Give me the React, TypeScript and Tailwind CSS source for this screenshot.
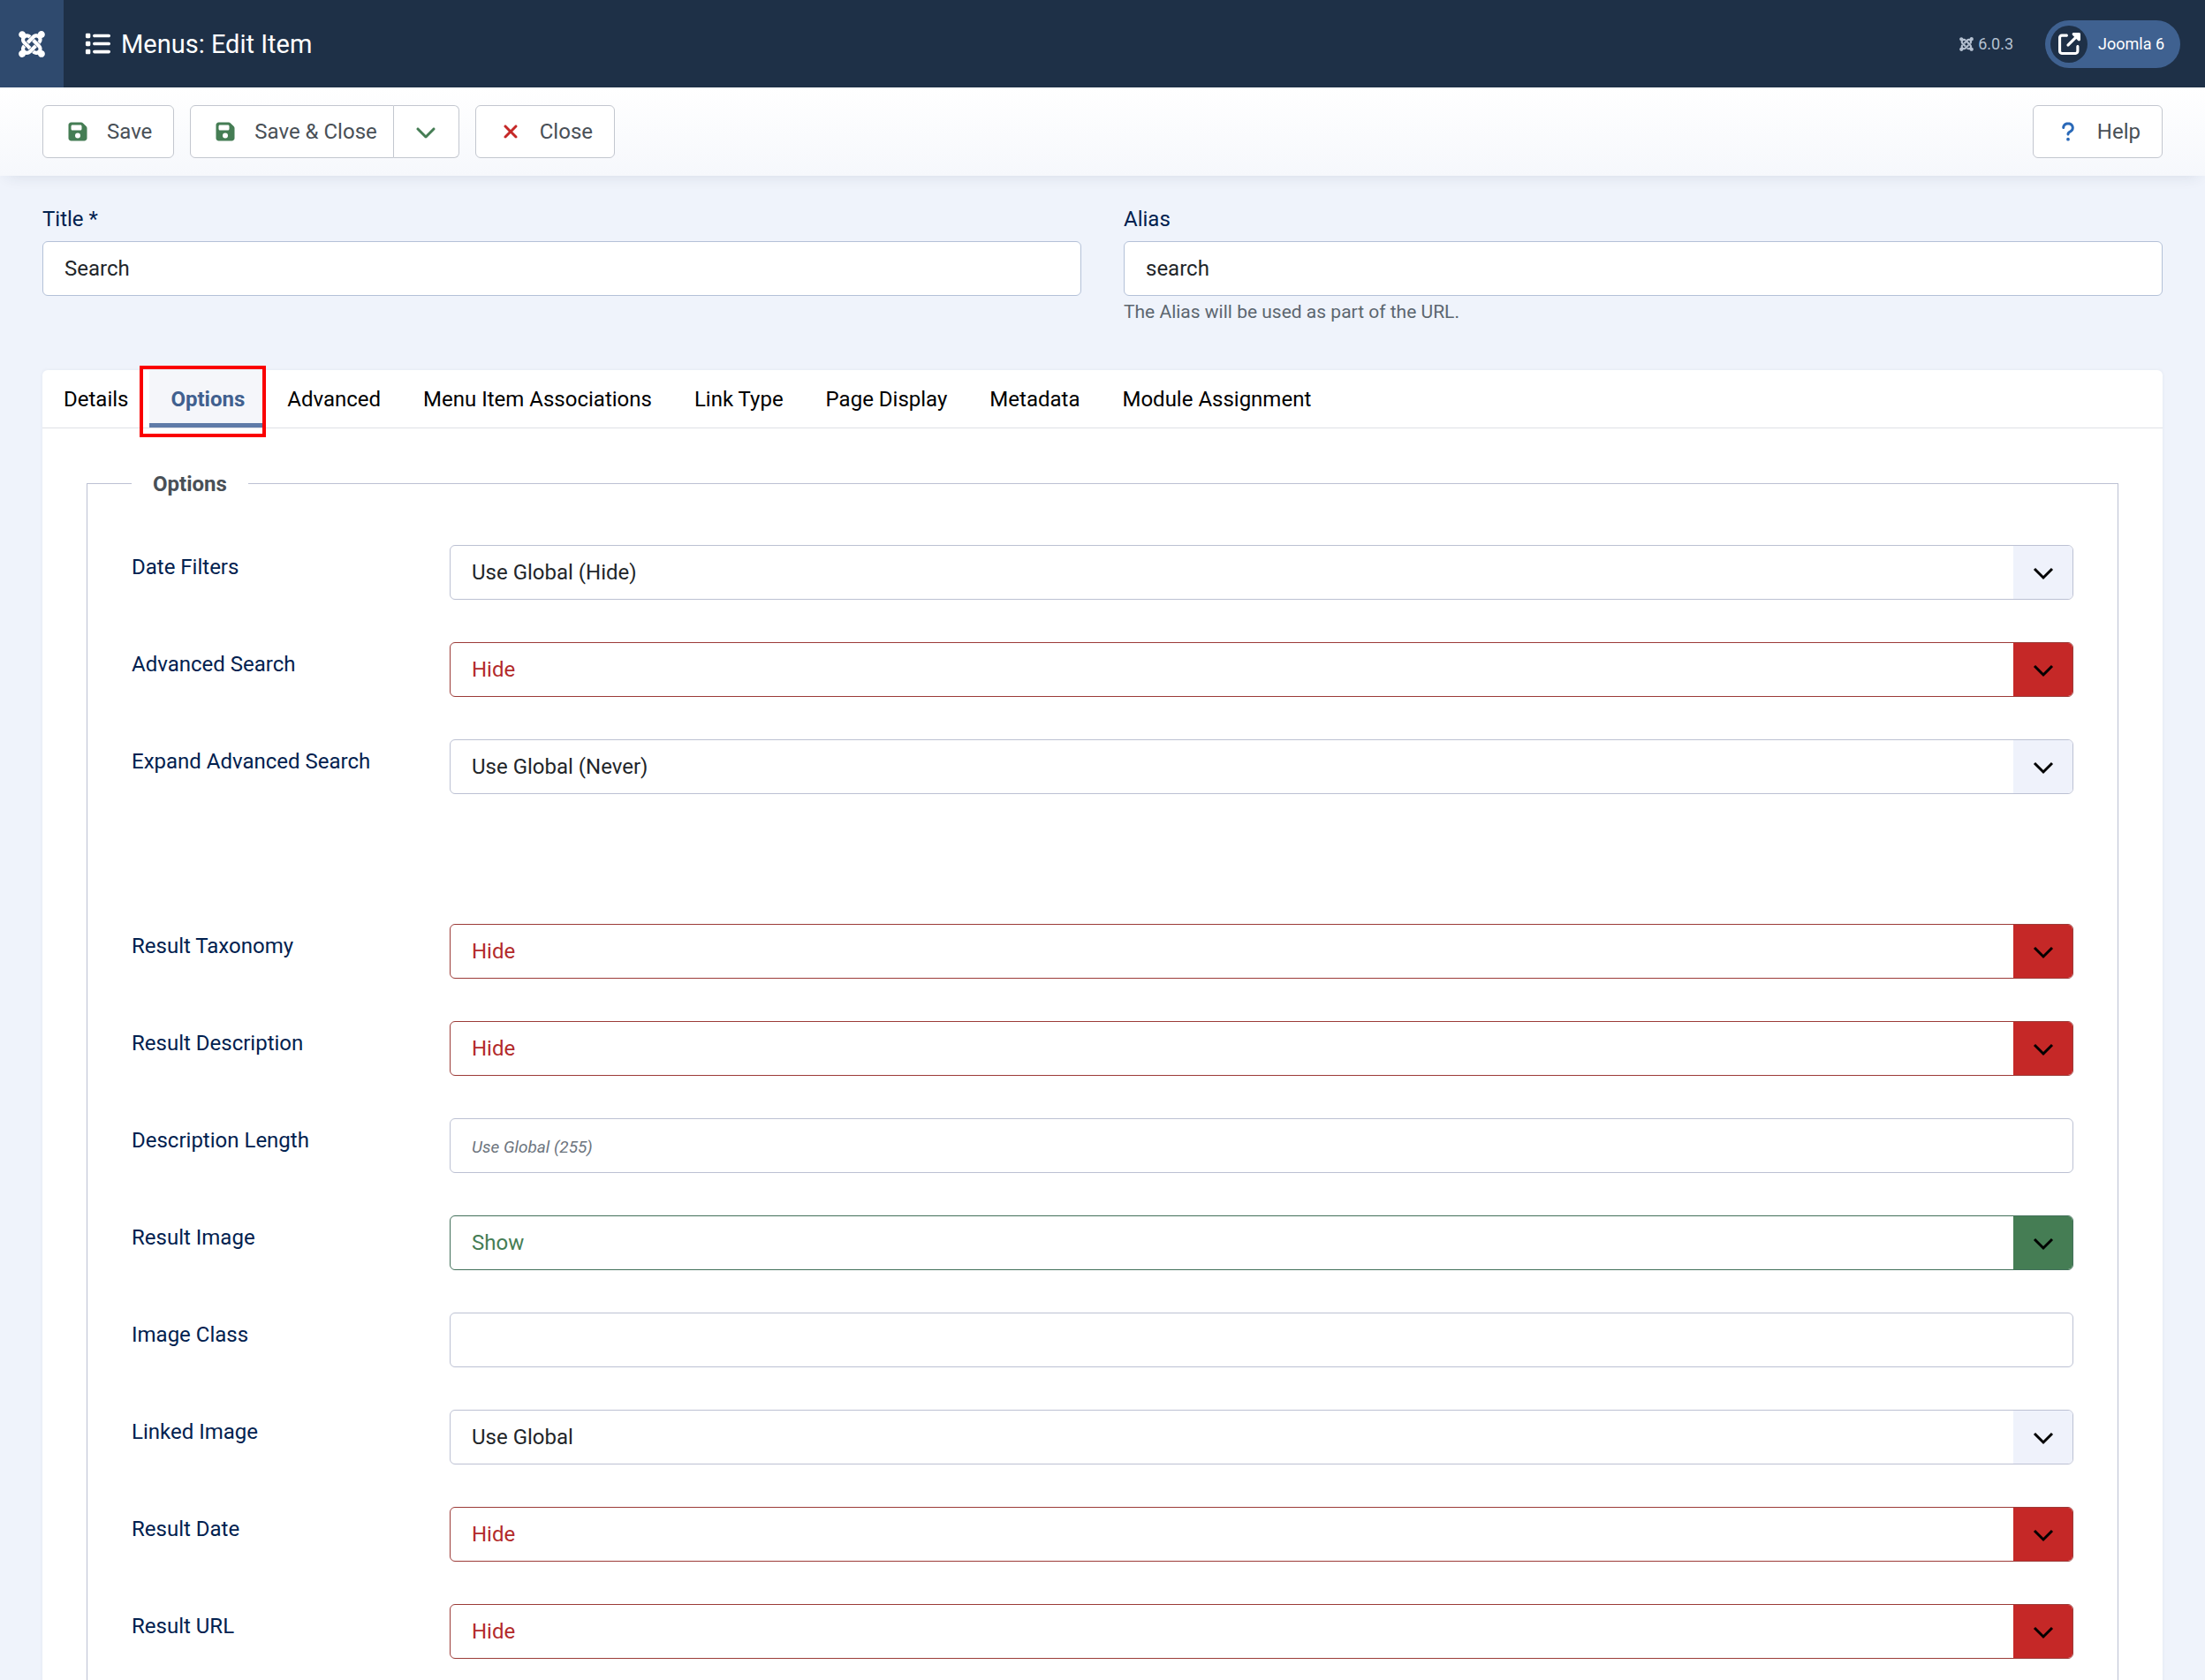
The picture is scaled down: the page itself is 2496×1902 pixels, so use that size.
import type { ReactNode } from "react"
import {
  FaChevronDown,
  FaFloppyDisk,
  FaJoomla,
  FaList,
  FaQuestion,
  FaUpRightFromSquare,
  FaXmark,
} from "react-icons/fa6"

type Tone = "default" | "danger" | "success"

type Field =
  | { kind: "select"; id: string; label: string; value: string; tone: Tone }
  | { kind: "text"; id: string; label: string; placeholder?: string }

const tabs = [
  "Details",
  "Options",
  "Advanced",
  "Menu Item Associations",
  "Link Type",
  "Page Display",
  "Metadata",
  "Module Assignment",
]

const searchFields: Field[] = [
  { kind: "select", id: "date-filters", label: "Date Filters", value: "Use Global (Hide)", tone: "default" },
  { kind: "select", id: "advanced-search", label: "Advanced Search", value: "Hide", tone: "danger" },
  { kind: "select", id: "expand-advanced", label: "Expand Advanced Search", value: "Use Global (Never)", tone: "default" },
]

const resultFields: Field[] = [
  { kind: "select", id: "result-taxonomy", label: "Result Taxonomy", value: "Hide", tone: "danger" },
  { kind: "select", id: "result-description", label: "Result Description", value: "Hide", tone: "danger" },
  { kind: "text", id: "description-length", label: "Description Length", placeholder: "Use Global (255)" },
  { kind: "select", id: "result-image", label: "Result Image", value: "Show", tone: "success" },
  { kind: "text", id: "image-class", label: "Image Class" },
  { kind: "select", id: "linked-image", label: "Linked Image", value: "Use Global", tone: "default" },
  { kind: "select", id: "result-date", label: "Result Date", value: "Hide", tone: "danger" },
  { kind: "select", id: "result-url", label: "Result URL", value: "Hide", tone: "danger" },
]

const selectTone: Record<Tone, string> = {
  default: "border-[#bcc1d3] text-[#22262a]",
  danger: "border-[#9c3b38] text-[#b32a2a]",
  success: "border-[#42705a] text-[#457d54]",
}

const arrowTone: Record<Tone, string> = {
  default: "bg-[#eff2fb]",
  danger: "bg-[#c52827]",
  success: "bg-[#457d54]",
}

function ToolbarButton({ icon, children }: { icon: ReactNode; children: ReactNode }) {
  return (
    <button
      type="button"
      className="flex h-[60px] items-center rounded-md border border-[#c3c7cf] bg-white pr-6 pl-[21px] text-[#495057]"
    >
      <span className="mr-[15px] flex w-9 justify-center">{icon}</span>
      {children}
    </button>
  )
}

function SelectBox({ id, value, tone }: { id: string; value: string; tone: Tone }) {
  return (
    <div className="relative grow">
      <select
        id={id}
        defaultValue={value}
        className={`h-[62px] w-full appearance-none rounded-md border bg-white px-6 ${selectTone[tone]}`}
      >
        <option>{value}</option>
      </select>
      <span
        className={`pointer-events-none absolute inset-y-px right-px flex w-[67px] items-center justify-center rounded-r-[5px] ${arrowTone[tone]}`}
        aria-hidden="true"
      >
        <svg width="24" height="24" viewBox="0 0 24 24" fill="none" stroke="#000" strokeWidth="3">
          <path d="M2 8l10 10L22 8" />
        </svg>
      </span>
    </div>
  )
}

function FieldRow({ field }: { field: Field }) {
  return (
    <div className="flex items-start">
      <label htmlFor={field.id} className="w-[360px] shrink-0 pt-[7px] text-[#01214f]">
        {field.label}
      </label>
      {field.kind === "select" ? (
        <SelectBox id={field.id} value={field.value} tone={field.tone} />
      ) : (
        <input
          id={field.id}
          type="text"
          placeholder={field.placeholder}
          className="h-[62px] grow rounded-md border border-[#bcc1d3] bg-white px-6 text-[#22262a] placeholder:text-[19px] placeholder:text-[#6d757e] placeholder:italic"
        />
      )}
    </div>
  )
}

export default function App() {
  return (
    <div className="min-h-screen bg-[#eff3fb] font-['Roboto',sans-serif] text-2xl leading-9">
      {/* Header */}
      <header className="flex h-[99px] items-center bg-[#1e3047] text-white">
        <a href="#home" aria-label="Home" className="flex h-full w-[72px] items-center justify-center bg-[#2f4a6e]">
          <FaJoomla className="size-[34px]" />
        </a>
        <h1 className="flex grow items-center gap-3 pl-6 text-[29px]">
          <FaList className="size-[29px]" />
          Menus: Edit Item
        </h1>
        <span className="mr-9 flex items-center gap-1 text-lg text-[#b5c1d1]">
          <FaJoomla className="size-[18px]" />
          6.0.3
        </span>
        <a
          href="#site"
          className="mr-7 flex h-[54px] items-center gap-3 rounded-full bg-[#3f6190] pr-[18px] pl-1.5 text-lg"
        >
          <span className="flex size-[42px] items-center justify-center rounded-full bg-[#1e3047]">
            <FaUpRightFromSquare className="size-[25px]" />
          </span>
          Joomla 6
        </a>
      </header>

      {/* Toolbar */}
      <div
        className="flex h-[100px] items-center gap-[18px] bg-linear-to-b from-white to-[#f6f8fc] px-12 shadow-[0_8px_16px_-8px_rgba(30,48,71,0.12)]"
        role="toolbar"
        aria-label="Toolbar"
      >
        <ToolbarButton icon={<FaFloppyDisk className="size-6 text-[#457d54]" />}>Save</ToolbarButton>
        <div className="flex">
          <button
            type="button"
            className="flex h-[60px] items-center rounded-l-md border border-[#c3c7cf] bg-white pr-[18px] pl-[21px] text-[#495057]"
          >
            <span className="mr-[15px] flex w-9 justify-center">
              <FaFloppyDisk className="size-6 text-[#457d54]" />
            </span>
            Save &amp; Close
          </button>
          <button
            type="button"
            aria-label="More save options"
            className="flex h-[60px] w-[74px] items-center justify-center rounded-r-md border border-l-0 border-[#c3c7cf] bg-white text-[#457d54]"
          >
            <FaChevronDown className="size-6" />
          </button>
        </div>
        <ToolbarButton icon={<FaXmark className="size-6 text-[#c52827]" />}>Close</ToolbarButton>
        <div className="grow" />
        <ToolbarButton icon={<FaQuestion className="size-6 text-[#2a69b8]" />}>Help</ToolbarButton>
      </div>

      <main className="px-12 pt-[31px]">
        {/* Title and alias */}
        <div className="grid grid-cols-2 gap-12">
          <div>
            <label htmlFor="title" className="mb-[7px] block text-[#01214f]">
              Title *
            </label>
            <input
              id="title"
              type="text"
              defaultValue="Search"
              className="h-[62px] w-full rounded-md border border-[#b4c1d8] bg-white px-6 text-[#22262a]"
            />
          </div>
          <div>
            <label htmlFor="alias" className="mb-[7px] block text-[#01214f]">
              Alias
            </label>
            <input
              id="alias"
              type="text"
              defaultValue="search"
              className="h-[62px] w-full rounded-md border border-[#b4c1d8] bg-white px-6 text-[#22262a]"
            />
            <p className="mt-0.5 text-[21px] leading-8 text-[#5c666f]">The Alias will be used as part of the URL.</p>
          </div>
        </div>

        <div className="mt-[50px] rounded-t-md bg-white shadow-[0_0_4px_rgba(30,48,71,0.06)]">
          {/* Tabs */}
          <div role="tablist" className="flex h-[66px] border-b border-[#dfe1e6]">
            {tabs.map((tab) =>
              tab === "Options" ? (
                <button
                  key={tab}
                  type="button"
                  role="tab"
                  aria-selected="true"
                  className="relative border-b-[5px] border-[#5f7ba8] bg-[#f5f6fa] px-6 pt-[5px] font-bold text-[#41608f]"
                >
                  {tab}
                  <span className="absolute -top-[5px] right-0 -bottom-4 -left-[11px] border-4 border-[#fa0000]" aria-hidden="true" />
                </button>
              ) : (
                <button key={tab} type="button" role="tab" aria-selected="false" className="px-6 text-black">
                  {tab}
                </button>
              ),
            )}
          </div>

          {/* Options panel */}
          <div role="tabpanel" className="px-[50px] pt-[43px]">
            <fieldset className="border border-[#bcc1d3] px-[50px] pb-12">
              <legend className="px-6 pt-0.5 font-bold text-[#495057]">Options</legend>
              <div className="flex flex-col gap-12 pt-[51px]">
                {searchFields.map((field) => (
                  <FieldRow key={field.id} field={field} />
                ))}
              </div>
              <div className="mt-[147px] flex flex-col gap-12">
                {resultFields.map((field) => (
                  <FieldRow key={field.id} field={field} />
                ))}
              </div>
            </fieldset>
          </div>
        </div>
      </main>
    </div>
  )
}
